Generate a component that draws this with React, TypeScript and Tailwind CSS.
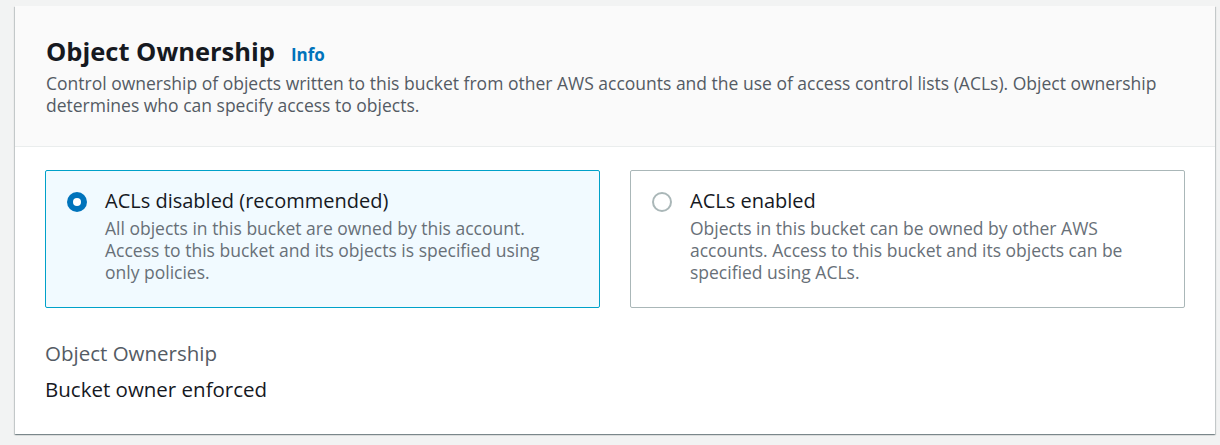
import React from 'react';

function Radio({ checked }: { checked: boolean }) {
  return checked ? (
    <span className="mt-[5px] flex h-5 w-5 shrink-0 items-center justify-center rounded-full bg-[#0073bb]">
      <span className="h-2 w-2 rounded-full bg-white" />
    </span>
  ) : (
    <span className="mt-[5px] h-5 w-5 shrink-0 rounded-full border-2 border-[#aab7b8] bg-white" />
  );
}

function Option({
  checked,
  title,
  text,
}: {
  checked: boolean;
  title: string;
  text: string;
}) {
  return (
    <div
      className={
        checked
          ? 'flex gap-[18px] rounded-[2px] border border-[#00a1c9] bg-[#f1faff] pl-[21px] pr-[40px] pt-[16px] pb-[24px]'
          : 'flex gap-[18px] rounded-[2px] border border-[#aab7b8] bg-white pl-[21px] pr-[40px] pt-[16px] pb-[24px]'
      }
    >
      <Radio checked={checked} />
      <div>
        <div className="text-[20px] leading-[28px] text-[#16191f]">{title}</div>
        <div className="mt-[2px] text-[17.5px] leading-[22px] text-[#687078]">{text}</div>
      </div>
    </div>
  );
}

export default function App() {
  return (
    <div
      className="min-h-[445px] bg-[#f2f3f3] pt-[6px] pl-[15px]"
      style={{ fontFamily: '"Open Sans", "Liberation Sans", sans-serif' }}
    >
      <div className="w-[1200px] bg-white shadow-[0_1px_1px_0_rgba(0,28,36,0.3),1px_1px_1px_0_rgba(0,28,36,0.15),-1px_1px_1px_0_rgba(0,28,36,0.15)]">
        <div className="border-b border-[#eaeded] bg-[#fafafa] px-[31px] pt-[28px] pb-[30px]">
          <div className="mb-[4px] flex items-baseline gap-[16px]">
            <h2 className="text-[25.5px] font-bold leading-[34px] text-[#16191f]">Object Ownership</h2>
            <a className="text-[17px] font-bold text-[#0073bb]">Info</a>
          </div>
          <p className="text-[17.5px] leading-[22px] text-[#545b64]">
            Control ownership of objects written to this bucket from other AWS accounts and the use of access control lists (ACLs). Object ownership determines who can specify access to objects.
          </p>
        </div>
        <div className="px-[30px] pt-[23px] pb-[31px]">
          <div className="grid grid-cols-2 gap-[30px]">
            <Option
              checked
              title="ACLs disabled (recommended)"
              text="All objects in this bucket are owned by this account. Access to this bucket and its objects is specified using only policies."
            />
            <Option
              checked={false}
              title="ACLs enabled"
              text="Objects in this bucket can be owned by other AWS accounts. Access to this bucket and its objects can be specified using ACLs."
            />
          </div>
          <div className="mt-[31px] text-[20.5px] leading-[28px] text-[#545b64]">Object Ownership</div>
          <div className="mt-[8px] text-[20.5px] leading-[28px] text-[#16191f]">Bucket owner enforced</div>
        </div>
      </div>
    </div>
  );
}
